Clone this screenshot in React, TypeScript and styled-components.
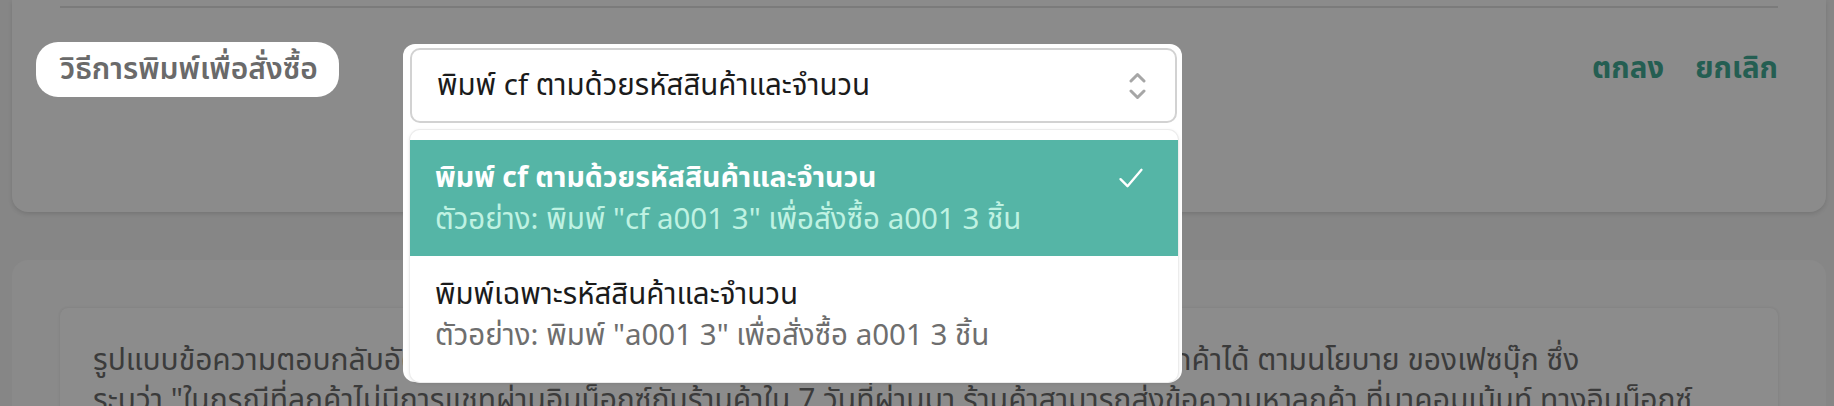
import React from "react";
import styled, { createGlobalStyle } from "styled-components";

const GlobalStyle = createGlobalStyle`
  html, body {
    margin: 0;
    padding: 0;
    background: #868686;
    overflow: hidden;
  }
  body {
    font-family: "Noto Sans Thai", "Noto Sans", "Liberation Sans", sans-serif;
  }
`;

const Page = styled.div`
  width: 1834px;
  height: 406px;
  box-sizing: border-box;
  padding: 0 8px 0 12px;
  display: flex;
  flex-direction: column;
  gap: 48px;
`;

const Card = styled.section`
  background: #8b8b8b;
  border-radius: 0 0 16px 16px;
  box-shadow: 0 2px 4px rgba(0, 0, 0, 0.12);
  padding: 6px 48px 0;
`;

const Divider = styled.hr`
  margin: 0;
  border: none;
  height: 2px;
  background: #7b7b7b;
`;

const FormRow = styled.div`
  display: grid;
  grid-template-columns: 350px 767px 1fr;
  align-items: start;
  padding: 34px 0 89px;
`;

const LabelSpot = styled.div`
  justify-self: start;
  margin-left: -24px;
  height: 55px;
  padding: 0 21px 0 24px;
  box-sizing: border-box;
  background: #ffffff;
  border-radius: 22px;
  display: flex;
  align-items: center;
  font-size: 30px;
  font-weight: 600;
  color: #6a6a6a;
  white-space: nowrap;
`;

const SelectField = styled.div`
  position: relative;
  margin-top: 6px;
`;

const Spotlight = styled.div`
  position: absolute;
  top: -4px;
  left: -7px;
  right: -5px;
  height: 338px;
  background: #ffffff;
  border-radius: 12px;
`;

const Trigger = styled.div`
  position: relative;
  height: 75px;
  box-sizing: border-box;
  border: 2px solid #d2d2d2;
  border-radius: 10px;
  background: #ffffff;
  display: flex;
  align-items: center;
  justify-content: space-between;
  padding: 0 29px 0 25px;
  font-size: 29.5px;
  color: #1b1b1b;
  white-space: nowrap;
`;

const Chevrons = styled.svg`
  width: 17px;
  height: 30px;
  color: #a6a6a6;
`;

const Listbox = styled.ul`
  position: absolute;
  top: 82px;
  left: 0;
  right: -1px;
  margin: 0;
  padding: 10px 0;
  list-style: none;
  background: #ffffff;
  border-radius: 10px;
  box-shadow: 0 0 0 1px #ececec, 0 1px 4px rgba(0, 0, 0, 0.12);
`;

const Option = styled.li<{ $active?: boolean }>`
  height: 116px;
  box-sizing: border-box;
  padding: 20px 33px 0 25px;
  background: ${(p) => (p.$active ? "#55b5a6" : "#ffffff")};
  display: flex;
  justify-content: space-between;
  align-items: flex-start;
`;

const OptionText = styled.div`
  display: flex;
  flex-direction: column;
  gap: 3px;
  white-space: nowrap;
`;

const OptionTitle = styled.span<{ $active?: boolean }>`
  font-size: ${(p) => (p.$active ? "28.5px" : "29.5px")};
  line-height: 38px;
  font-weight: ${(p) => (p.$active ? 700 : 400)};
  color: ${(p) => (p.$active ? "#ffffff" : "#1b1b1b")};
`;

const OptionHint = styled.span<{ $active?: boolean }>`
  font-size: 29.5px;
  line-height: 38px;
  color: ${(p) => (p.$active ? "#bff2e2" : "#6e6e6e")};
`;

const CheckIcon = styled.svg`
  width: 28px;
  height: 28px;
  margin-top: 4px;
  color: #ffffff;
`;

const Actions = styled.div`
  justify-self: end;
  display: flex;
  gap: 31px;
  margin-top: 5px;
`;

const TextButton = styled.button`
  border: none;
  background: none;
  padding: 0;
  font-family: inherit;
  font-size: 29.5px;
  font-weight: 700;
  color: #245e52;
  cursor: pointer;
`;

const InfoCard = styled.section`
  flex: 1;
  background: #8a8a8a;
  border-radius: 16px 16px 0 0;
  padding: 48px 48px 0;
`;

const InfoBox = styled.div`
  height: 100%;
  box-sizing: border-box;
  background: #8c8c8c;
  border-radius: 8px 8px 0 0;
  box-shadow: 0 0 3px rgba(0, 0, 0, 0.1);
  padding: 33px 33px 0;
  font-size: 30px;
  line-height: 40px;
  color: #3b3b3b;
  white-space: nowrap;
  overflow: hidden;
`;

export default function App() {
  return (
    <>
      <GlobalStyle />
      <Page>
        <Card>
          <Divider />
          <FormRow>
            <LabelSpot>วิธีการพิมพ์เพื่อสั่งซื้อ</LabelSpot>
            <SelectField>
              <Spotlight />
              <Trigger>
                <span>พิมพ์ cf ตามด้วยรหัสสินค้าและจำนวน</span>
                <Chevrons viewBox="0 0 17 30" fill="none" stroke="currentColor" strokeWidth="3" strokeLinecap="round" strokeLinejoin="round">
                  <polyline points="2,10 8.5,3.5 15,10" />
                  <polyline points="2,20 8.5,26.5 15,20" />
                </Chevrons>
              </Trigger>
              <Listbox>
                <Option $active>
                  <OptionText>
                    <OptionTitle $active>พิมพ์ cf ตามด้วยรหัสสินค้าและจำนวน</OptionTitle>
                    <OptionHint $active>ตัวอย่าง: พิมพ์ "cf a001 3" เพื่อสั่งซื้อ a001 3 ชิ้น</OptionHint>
                  </OptionText>
                  <CheckIcon viewBox="0 0 24 24" fill="none" stroke="currentColor" strokeWidth="2" strokeLinecap="round" strokeLinejoin="round">
                    <polyline points="3,13 9,19 21,5" />
                  </CheckIcon>
                </Option>
                <Option>
                  <OptionText>
                    <OptionTitle>พิมพ์เฉพาะรหัสสินค้าและจำนวน</OptionTitle>
                    <OptionHint>ตัวอย่าง: พิมพ์ "a001 3" เพื่อสั่งซื้อ a001 3 ชิ้น</OptionHint>
                  </OptionText>
                </Option>
              </Listbox>
            </SelectField>
            <Actions>
              <TextButton>ตกลง</TextButton>
              <TextButton>ยกเลิก</TextButton>
            </Actions>
          </FormRow>
        </Card>
        <InfoCard>
          <InfoBox>
            รูปแบบข้อความตอบกลับอัตโนมัติ สำหรับการตอบคอมเม้นท์ เพื่อให้ร้านค้าสามารถ ติดต่อกับลูกค้าได้ ตามนโยบาย ของเฟซบุ๊ก ซึ่ง
            <br />
            ระบุว่า "ในกรณีที่ลูกค้าไม่มีการแชทผ่านอินบ็อกซ์กับร้านค้าใน 7 วันที่ผ่านมา ร้านค้าสามารถส่งข้อความหาลูกค้า ที่มาคอมเม้นท์ ทางอินบ็อกซ์
          </InfoBox>
        </InfoCard>
      </Page>
    </>
  );
}
